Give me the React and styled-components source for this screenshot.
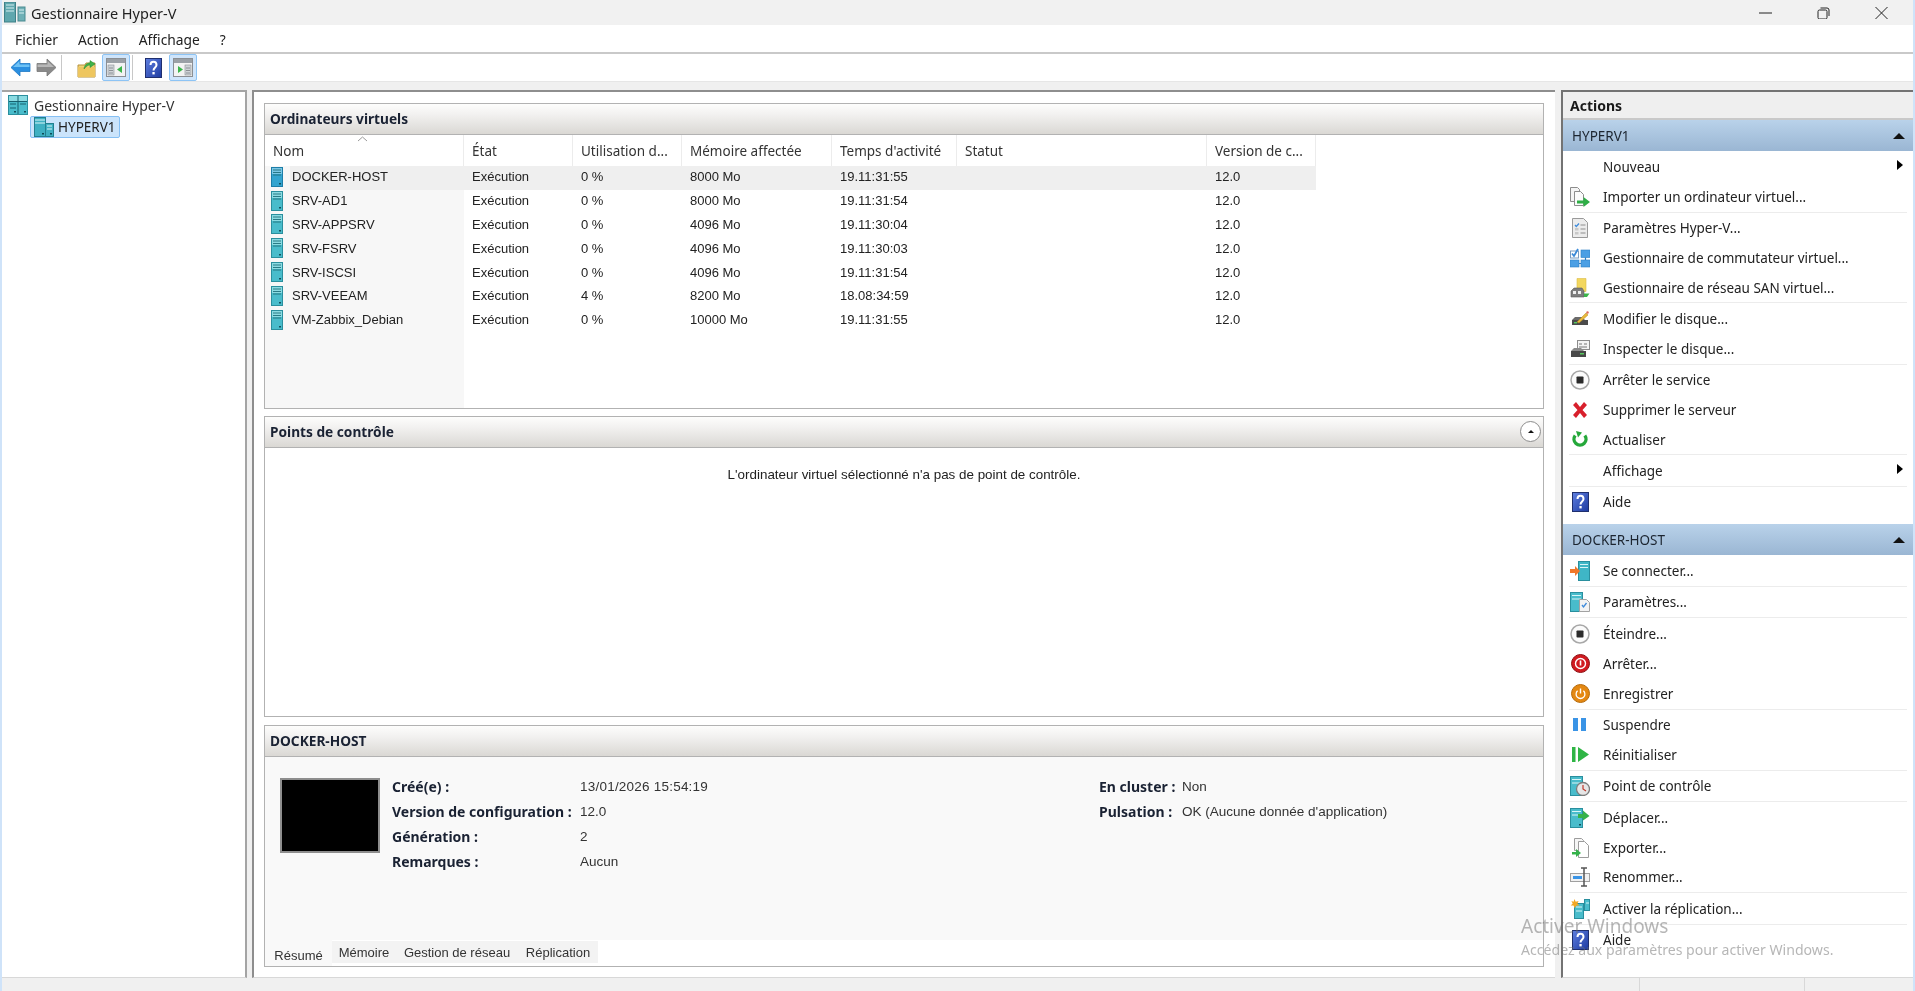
import React from "react";
import styled, { createGlobalStyle } from "styled-components";

const UI = `"Noto Sans", "Open Sans", sans-serif`;
const LIST = `"Liberation Sans", Arial, sans-serif`;

const Global = createGlobalStyle`
  html, body { margin: 0; padding: 0; height: 100%; overflow: hidden; background: #f0f0f0; }
  #root { height: 100%; }
  * { box-sizing: border-box; }
`;

const Window = styled.div`
  position: relative; width: 1915px; height: 991px; display: flex; flex-direction: column;
  background: #f0f0f0; border-left: 2px solid #cfe3f9; border-right: 2px solid #cfe3f9;
  font-family: ${UI}; color: #1c1c1c; overflow: hidden; filter: blur(.3px);
`;
const TitleBar = styled.div`height: 25px; display: flex; align-items: center; background: #f1f1f1; padding-left: 2px;`;
const TitleText = styled.span`font-size: 14.5px; margin-left: 5px; color: #222;`;
const WinControls = styled.div`margin-left: auto; display: flex; align-items: center; margin-right: 25px; gap: 45px;`;
const MenuBar = styled.div`
  height: 29px; display: flex; align-items: center; background: #fff; border-bottom: 2px solid #c9c9c9;
  padding: 2px 0 0 13px; gap: 20px;
`;
const MenuItem = styled.span`font-size: 13.8px; color: #222;`;
const ToolBar = styled.div`height: 28px; display: flex; align-items: center; background: #fff; border-bottom: 1px solid #e6e6e6; padding-left: 6px;`;
const ToolIcon = styled.div`
  width: ${p => p.$w || 28}px; height: 27px; display: flex; align-items: center; justify-content: center;
  margin-right: ${p => p.$mr || 0}px;
  ${p => p.$on && `background: #cfe5fb; border: 1px solid #8dc4f5; border-radius: 2px;`}
`;
const ToolSep = styled.div`width: 1px; height: 25px; background: #c8c8c8; margin: 0 ${p => p.$r || 6}px 0 ${p => p.$l || 2}px;`;
const Main = styled.div`flex: 1; margin-top: 8px; display: flex; min-height: 0;`;
const TreePanel = styled.div`
  width: 245px; background: #fff; border-top: 2px solid #a4a4a4; border-right: 2px solid #a4a4a4; margin-right: 5px;
  padding: 2px 0 0 6px; border-bottom: 1px solid #d8d8d8;
`;
const TreeRoot = styled.div`display: flex; align-items: center; height: 22px; font-size: 14px; gap: 6px; color: #333;`;
const TreeNode = styled.div`
  display: inline-flex; align-items: center; height: 22px; margin-left: 22px; padding: 0 3px; gap: 4px; font-size: 13.5px;
  background: #cbe4fb; border: 1px solid #86c0f4; border-radius: 2px; color: #222;
`;
const Center = styled.div`
  width: 1303px; background: #fff; border-top: 2px solid #8e8e8e; border-left: 2px solid #8e8e8e; margin-right: 6px;
  padding: 11px 11px 11px 10px; display: flex; flex-direction: column; gap: 7px; border-bottom: 1px solid #d8d8d8;
`;
const Pane = styled.section`
  display: flex; flex-direction: column; border: 1.5px solid #b2b2b2; height: ${p => p.$h}px; flex: none;
  background: ${p => p.$bg || "#fff"}; margin-top: ${p => p.$mt || 0}px;
`;
const PaneHead = styled.header`
  height: 31px; flex: none; display: flex; align-items: center; justify-content: space-between; padding: 0 2px 2px 5px;
  background: linear-gradient(#fdfdfc, #f2f1f0 35%, #dad8d4); border-bottom: 1.5px solid #b2b2b2;
  font-size: 13.7px; font-weight: 700; color: #1a2233;
`;
const Collapse = styled.div`
  width: 21px; height: 21px; border-radius: 50%; border: 1px solid #8c8c8c; background: #fff; display: flex; align-items: center; justify-content: center;
`;
const Up = styled.span`width: 0; height: 0; border-left: ${p => p.$s}px solid transparent; border-right: ${p => p.$s}px solid transparent; border-bottom: ${p => p.$s}px solid #111;`;
const Cols = "199px 109px 109px 150px 125px 250px 109px";
const ListHead = styled.div`
  display: grid; grid-template-columns: ${Cols}; width: 1051px; height: 31px; flex: none; position: relative;
`;
const HeadCell = styled.div`
  font-size: 13.5px; color: #333; padding: 7px 0 0 8px; border-right: 1px solid #ececec; white-space: nowrap; overflow: hidden;
`;
const SortMark = styled.svg`position: absolute; left: 92px; top: 1px;`;
const ListBody = styled.div`flex: 1; background: linear-gradient(to right, #f7f7f7 199px, #fff 199px); font-family: ${LIST}; font-size: 13px; color: #222;`;
const Row = styled.div`display: grid; grid-template-columns: ${Cols}; width: 1051px; height: 23.8px; align-items: center;`;
const NameCell = styled.div`display: flex; align-items: center; height: 100%; padding-left: 6px; gap: 7px;`;
const NameText = styled.span`
  flex: 1; align-self: stretch; display: flex; align-items: center; padding: 0 0 2px 2px;
  background: ${p => p.$sel ? "#efefef" : "transparent"};
`;
const Cell = styled.div`padding: 0 0 2px 8px; height: 100%; display: flex; align-items: center; background: ${p => p.$sel ? "#efefef" : "transparent"};`;
const Empty = styled.div`flex: 1; text-align: center; font-size: 13.4px; padding-top: 19px; font-family: ${LIST}; color: #222;`;
const Details = styled.div`flex: 1; display: flex; background: #f9f9f9; padding: 21px 0 0 15px; font-family: ${LIST}; font-size: 13.5px; color: #333;`;
const Thumb = styled.div`width: 100px; height: 75px; background: #000; border: 2px solid #8e8e8e; margin-right: 12px;`;
const Props = styled.div`
  display: grid; grid-template-columns: ${p => p.$cols}; grid-auto-rows: 25px; width: ${p => p.$w}px; align-items: center; height: 100px; margin-top: -4px;
`;
const PropLabel = styled.div`font-family: ${UI}; font-weight: 700; font-size: 14px; color: #1a2233; white-space: nowrap;`;
const PropValue = styled.div`white-space: nowrap; letter-spacing: ${p => p.$spread || 0}px;`;
const Tabs = styled.div`height: 26px; flex: none; display: flex; background: #fff; align-items: flex-start; font-family: ${LIST}; font-size: 13px; color: #333;`;
const Tab = styled.div`
  height: ${p => p.$on ? 26 : 22}px; margin-top: ${p => p.$on ? 0 : 1}px; width: ${p => p.$w}px; display: flex; justify-content: center;
  align-items: ${p => p.$on ? "flex-end" : "center"}; padding-bottom: ${p => p.$on ? 3 : 0}px;
  background: ${p => p.$on ? "#f9f9f9" : "#f3f3f3"};
`;
const ActionsPanel = styled.aside`
  width: 352px; background: #fff; border-top: 2px solid #737373; border-left: 2px solid #737373; border-bottom: 1px solid #d8d8d8;
  display: flex; flex-direction: column;
`;
const ActionsTitle = styled.div`height: 28px; flex: none; background: #efefef; border-bottom: 2px solid #c9c9c9; padding-left: 7px; font-size: 14px; font-weight: 700; color: #1a1a1a; display: flex; align-items: center;`;
const SectionHead = styled.div`
  height: 31px; flex: none; background: linear-gradient(#b9d2ea, #9ab6d3); display: flex; align-items: center; justify-content: space-between;
  padding: 1px 8px 0 9px; font-size: 13.5px; color: #1c2530; margin: ${p => p.$mt || 0}px 0 1px;
`;
const ActionRow = styled.div`height: ${p => p.$h}px; flex: none; display: flex; align-items: center; padding-left: 7px; position: relative;`;
const IconSlot = styled.div`width: 20px; height: 20px; display: flex; align-items: center; justify-content: center; margin-right: 13px;`;
const ActionText = styled.span`font-size: 13.5px; color: #222; white-space: nowrap;`;
const Chevron = styled.span`position: absolute; right: 10px; top: 8px; width: 0; height: 0; border-top: 5.5px solid transparent; border-bottom: 5.5px solid transparent; border-left: 6px solid #000;`;
const ActionSep = styled.div`height: 1.5px; flex: none; margin: 0 6px; border-top: 1px solid #ececec;`;
const StatusBar = styled.div`height: 13px; flex: none; display: grid; grid-template-columns: 1638px 165px 1fr; background: #f0f0f0;`;
const StatusCell = styled.div`border-right: 1px solid #d8d8d8;`;
const Watermark = styled.div`position: absolute; left: 1519px; top: 913px; color: rgba(110,110,110,.5); pointer-events: none;`;
const WmTitle = styled.div`font-size: 19px; line-height: 26px;`;
const WmText = styled.div`font-size: 14.1px; line-height: 20px; margin-top: 1px;`;

const Tower = ({ sel, w = 12, h = 20 }) => (
  <svg width={w} height={h} viewBox="0 0 12 20" style={{ flex: "none", marginTop: -2 }}>
    <rect x=".5" y=".5" width="11" height="19" fill={sel ? "#33a4cf" : "#49bccb"} stroke={sel ? "#1d7ea8" : "#2a8f9e"} />
    <rect x="1" y="1" width="10" height="6" fill={sel ? "#7ac7e6" : "#8adbe2"} />
    <path d="M2 3h8M2 5.5h8M2 8h8" stroke="#1f6f7c" strokeWidth=".9" />
    <rect x="8" y="16" width="2" height="1.5" fill="#134f5c" />
  </svg>
);
const TreeRootIcon = () => (
  <svg width="20" height="20" viewBox="0 0 20 20">
    <rect x=".5" y=".5" width="19" height="19" fill="#49bccb" stroke="#2a8f9e" />
    <rect x="1" y="1" width="18" height="5" fill="#8adbe2" />
    <path d="M1 6.5h18M10 1v18M2 9h6M12 9h6M2 13h6" stroke="#17606e" strokeWidth="1" />
    <rect x="6" y="16" width="2" height="1.5" fill="#134f5c" /><rect x="16" y="16" width="2" height="1.5" fill="#134f5c" />
  </svg>
);
const TreeHostIcon = () => (
  <svg width="20" height="20" viewBox="0 0 20 20">
    <rect x=".5" y=".5" width="11" height="19" fill="#3fb0c2" stroke="#23808f" />
    <rect x="11.5" y="6.5" width="8" height="13" fill="#3fb0c2" stroke="#23808f" />
    <path d="M1 3h10M1 6h10M13 9h5M13 12h5" stroke="#d9f5f7" strokeWidth="1" />
    <rect x="8" y="16" width="2" height="1.5" fill="#0f4a55" /><rect x="16" y="16" width="2" height="1.5" fill="#0f4a55" />
  </svg>
);
const AppIcon = () => (
  <svg width="22" height="22" viewBox="0 0 22 22">
    <rect x=".5" y="0" width="11" height="20" fill="#5fa7ae" stroke="#3f8087" />
    <path d="M2 3h8M2 6h8M2 9h8" stroke="#d6eef0" />
    <rect x="14" y="5" width="7" height="14" fill="#6fb0b6" stroke="#4a8b91" />
    <path d="M15 8h5M15 11h5" stroke="#d6eef0" />
  </svg>
);
const Arrow = ({ flip, top, bottom, edge }) => (
  <svg width="21" height="19" viewBox="0 0 21 19" style={flip ? { transform: "scaleX(-1)" } : undefined}>
    <path d="M1 9.5 L10 1 V5.5 H20 V13.5 H10 V18 Z" fill={bottom} stroke={edge} strokeWidth=".8" />
    <path d="M3 9 L9.5 3 V6.5 H19.5 V9 Z" fill={top} />
  </svg>
);
const FolderUp = () => (
  <svg width="20" height="20" viewBox="0 0 20 20">
    <path d="M1 7h7l1-2h9v14H1z" fill="#f0d378" stroke="#b6923c" />
    <path d="M1 9h17v10H1z" fill="#eec65f" />
    <path d="M7 11c.5-4 3-6 6-6V2.5l5 3.5-5 3.5V7c-2 0-4 1.5-6 4z" fill="#3fb24a" stroke="#1f8a2e" strokeWidth=".5" />
  </svg>
);
const PanelIcon = ({ right }) => (
  <svg width="20" height="19" viewBox="0 0 20 19">
    <rect x=".5" y=".5" width="19" height="18" fill="#f3f3f3" stroke="#8b8f94" />
    <rect x="1" y="1" width="18" height="4" fill="#9aa0a6" />
    {right ? <>
      <path d="M5 8 L10 11.5 L5 15z" fill="#3bb54a" />
      <rect x="12" y="7" width="6" height="10" fill="#cfd3d7" stroke="#8b8f94" strokeWidth=".6" />
      <path d="M13 10h4M13 12.5h4M13 15h4" stroke="#7c8085" strokeWidth=".8" />
    </> : <>
      <rect x="2" y="7" width="6" height="10" fill="#cfd3d7" stroke="#8b8f94" strokeWidth=".6" />
      <path d="M3 10h4M3 12.5h4M3 15h4" stroke="#7c8085" strokeWidth=".8" />
      <path d="M16 8 L11 11.5 L16 15z" fill="#3bb54a" />
    </>}
  </svg>
);
const Help = ({ w = 17, h = 20 }) => (
  <svg width={w} height={h} viewBox="0 0 17 20">
    <defs><linearGradient id="hlp" x1="0" y1="0" x2="1" y2="1"><stop offset="0" stopColor="#5f7fe0" /><stop offset="1" stopColor="#1d3aa0" /></linearGradient></defs>
    <rect x=".5" y=".5" width="16" height="19" fill="url(#hlp)" stroke="#1f2f6e" />
    <path d="M5.5 7c0-4.5 6-4.5 6 0 0 2.5-3 2.5-3 5.5" fill="none" stroke="#fff" strokeWidth="2" />
    <rect x="7.4" y="14" width="2.3" height="2.4" fill="#fff" />
  </svg>
);
const I = {
  none: () => null,
  importVm: () => (
    <svg width="20" height="20" viewBox="0 0 20 20">
      <path d="M.5.5h7l2 2v12H.5z" fill="#f4f4f4" stroke="#8c8c8c" />
      <path d="M4.5 4.5h6l3 3v11h-9z" fill="#fbfbfb" stroke="#8c8c8c" />
      <path d="M7 13.5h6.5V10l6.5 5-6.5 5v-3.5H7z" fill="#2fae46" />
    </svg>
  ),
  settings: () => (
    <svg width="16" height="20" viewBox="0 0 16 20">
      <path d="M.5.5h11l4 4v15H.5z" fill="#ececec" stroke="#9a9a9a" />
      <path d="M3 7l1.3 1.5L7 5.5" fill="none" stroke="#3f8bdb" strokeWidth="1.3" />
      <rect x="3" y="10" width="3.5" height="2.5" fill="#c8c8c8" /><rect x="3" y="14" width="3.5" height="2.5" fill="#c8c8c8" />
      <path d="M8.5 7h5M8.5 11h5M8.5 15h5" stroke="#adadad" strokeWidth="1.4" />
    </svg>
  ),
  switchMgr: () => (
    <svg width="20" height="20" viewBox="0 0 20 20">
      <rect x=".5" y="3" width="8" height="7" fill="#fff" stroke="#7a9cc0" />
      <path d="M2 5.5l2 2.5L8 1" fill="none" stroke="#3b8ad8" strokeWidth="1.8" />
      <rect x="11" y="2" width="9" height="7.5" fill="#4b9fe4" stroke="#2c7fc4" strokeWidth=".6" />
      <path d="M15.5 9.5v3M9 15.5h3" stroke="#2c7fc4" strokeWidth="1.2" />
      <rect x="0" y="12" width="9" height="7" fill="#4b9fe4" stroke="#2c7fc4" strokeWidth=".6" />
      <rect x="11" y="12" width="9" height="7" fill="#4b9fe4" stroke="#2c7fc4" strokeWidth=".6" />
    </svg>
  ),
  san: () => (
    <svg width="20" height="20" viewBox="0 0 20 20">
      <path d="M7 .5h9v13H7z" fill="#f3d75f" stroke="#dcbc45" strokeWidth=".6" />
      <path d="M1 13l3-3h8l2 3v6H1z" fill="#7d7d7d" stroke="#5a5a5a" strokeWidth=".6" />
      <rect x="3" y="13" width="3" height="3" fill="#eee" /><rect x="8" y="13" width="3" height="3" fill="#eee" />
      <path d="M14 15.5h5.5L17 19h-3z" fill="#3bb54a" />
    </svg>
  ),
  editDisk: () => (
    <svg width="18" height="15" viewBox="0 0 18 15">
      <path d="M1 9l3-3h7l3 3v5H1z" fill="#6b6b6b" />
      <rect x="1" y="9" width="16" height="5" fill="#4b4b4b" />
      <path d="M6 11l9-9 2 2-9 8z" fill="#e9b93c" stroke="#b78a1e" strokeWidth=".5" />
      <rect x="3" y="11" width="3" height="1.4" fill="#57c85f" />
      <circle cx="16.5" cy="1.5" r="1.2" fill="#e06a5a" />
    </svg>
  ),
  inspectDisk: () => (
    <svg width="20" height="18" viewBox="0 0 20 18">
      <rect x="7.5" y=".5" width="12" height="9" fill="#f4f4f4" stroke="#8c8c8c" />
      <path d="M9 4h3M14 4h3M9 7h8" stroke="#777" />
      <path d="M1 11l3-3h7l3 3z" fill="#8a8a8a" />
      <rect x="1" y="11" width="15" height="6" fill="#484848" />
      <rect x="10" y="13" width="4" height="1.5" fill="#57c85f" />
    </svg>
  ),
  stop: () => (
    <svg width="20" height="20" viewBox="0 0 20 20">
      <circle cx="10" cy="10" r="9" fill="#fbfbfb" stroke="#a8a8a8" strokeWidth="1.5" />
      <rect x="6.5" y="6.5" width="7" height="7" rx=".8" fill="#2a2a2a" />
    </svg>
  ),
  del: () => (
    <svg width="18" height="18" viewBox="0 0 18 18"><path d="M2 4l3-3 4 5 4-5 3 3-4.5 5 4.500 5-3 3-4-5-4 5-3-3 4.5-5z" fill="#d8202c" /></svg>
  ),
  refresh: () => (
    <svg width="16" height="17" viewBox="0 0 16 17">
      <path d="M3.2 4.5 A6 6 0 1 0 12.8 4.5" fill="none" stroke="#25a83a" strokeWidth="3.4" />
      <path d="M4 0 L10 1.5 L6 6.5z" fill="#25a83a" />
    </svg>
  ),
  connect: () => (
    <svg width="20" height="20" viewBox="0 0 20 20">
      <rect x="8.5" y=".5" width="11" height="19" fill="#3fb6c6" stroke="#2a8f9e" />
      <path d="M10 3.5h8M10 6.5h8" stroke="#d9f5f7" />
      <path d="M0 8h5V5l5 5-5 5v-3H0z" fill="#f0782a" />
    </svg>
  ),
  vmSettings: () => (
    <svg width="20" height="20" viewBox="0 0 20 20">
      <rect x=".5" y=".5" width="12" height="19" fill="#49bccb" stroke="#2a8f9e" />
      <path d="M2 3.5h9M2 7h9" stroke="#d9f5f7" />
      <path d="M9.5 7.5h7l3 3v9h-10z" fill="#f3f3f3" stroke="#a2a2a2" />
      <path d="M12 13l1.5 2 3-4" fill="none" stroke="#3f8bdb" strokeWidth="1.3" />
    </svg>
  ),
  off: () => (
    <svg width="19" height="19" viewBox="0 0 19 19">
      <circle cx="9.5" cy="9.5" r="9" fill="#d11a20" stroke="#8f1014" />
      <circle cx="9.5" cy="9.5" r="5" fill="none" stroke="#fff" strokeWidth="1.4" />
      <rect x="8.7" y="6.5" width="1.6" height="5" fill="#fff" />
    </svg>
  ),
  save: () => (
    <svg width="19" height="19" viewBox="0 0 19 19">
      <circle cx="9.5" cy="9.5" r="9" fill="#e48812" stroke="#b66a0a" />
      <path d="M6.6 6.8a4.4 4.4 0 1 0 5.8 0" fill="none" stroke="#fff" strokeWidth="1.3" />
      <rect x="8.8" y="4.5" width="1.4" height="5" fill="#fff" />
    </svg>
  ),
  pause: () => (
    <svg width="14" height="14" viewBox="0 0 14 14"><rect x="0" y="0" width="5" height="13" fill="#3a94e6" /><rect x="8" y="0" width="5" height="13" fill="#3a94e6" /></svg>
  ),
  reset: () => (
    <svg width="17" height="15" viewBox="0 0 17 15"><rect x="0" y="0" width="3.5" height="15" fill="#2fb545" /><path d="M6 0l11 7.5L6 15z" fill="#2fb545" /></svg>
  ),
  checkpoint: () => (
    <svg width="20" height="20" viewBox="0 0 20 20">
      <rect x=".5" y=".5" width="12" height="19" fill="#49bccb" stroke="#2a8f9e" />
      <path d="M2 3.5h9M2 7h9" stroke="#d9f5f7" />
      <circle cx="13" cy="13" r="6.5" fill="#e6e6e6" stroke="#7c7c7c" strokeWidth="1.3" />
      <path d="M13 9v4l3 2" stroke="#c0392b" fill="none" strokeWidth="1.2" />
    </svg>
  ),
  move: () => (
    <svg width="20" height="20" viewBox="0 0 20 20">
      <rect x=".5" y=".5" width="12" height="19" fill="#49bccb" stroke="#2a8f9e" />
      <path d="M2 3.5h9M2 7h9" stroke="#d9f5f7" />
      <rect x="9" y="16" width="2" height="1.5" fill="#134f5c" />
      <path d="M8 6h5V2.5L19.5 8 13 12.5V10H8z" fill="#35b24a" />
    </svg>
  ),
  exportVm: () => (
    <svg width="17" height="20" viewBox="0 0 17 20">
      <path d="M2.5.5h7l2 2v10h-9z" fill="#f6f6f6" stroke="#9c9c9c" />
      <path d="M6.5 3.5h6l4 4v12h-10z" fill="#fff" stroke="#9c9c9c" />
      <path d="M0 14h4v-3l5 4-5 4v-2.5H0z" fill="#35b24a" />
    </svg>
  ),
  rename: () => (
    <svg width="20" height="20" viewBox="0 0 20 20">
      <rect x=".5" y="6.5" width="19" height="8" fill="#f1f1f1" stroke="#a0a0a0" />
      <rect x="3" y="9" width="9" height="3" fill="#3a94e6" />
      <path d="M11 1h6M11 19h6M14 1v18" stroke="#555" strokeWidth="1.5" />
    </svg>
  ),
  replicate: () => (
    <svg width="20" height="20" viewBox="0 0 20 20">
      <rect x="4.5" y="4.5" width="9" height="15" fill="#49bccb" stroke="#2a8f9e" />
      <rect x="14.5" y=".5" width="5" height="11" fill="#49bccb" stroke="#2a8f9e" />
      <path d="M6 8h6M6 12h6M16 4h3" stroke="#d9f5f7" />
      <path d="M4.5 0l1.2 2.8L8.6 2 7.4 4.6l2 2-2.900-.2L4.5 9 3.6 6.400.7 6.600l2-2L1.4 2l2.200.8z" fill="#f2a825" />
    </svg>
  ),
  help: () => <Help />,
};

const hostActions = [
  { label: "Nouveau", icon: "none", more: true },
  { label: "Importer un ordinateur virtuel...", icon: "importVm", sep: true },
  { label: "Paramètres Hyper-V...", icon: "settings" },
  { label: "Gestionnaire de commutateur virtuel...", icon: "switchMgr" },
  { label: "Gestionnaire de réseau SAN virtuel...", icon: "san", sep: true },
  { label: "Modifier le disque...", icon: "editDisk" },
  { label: "Inspecter le disque...", icon: "inspectDisk", sep: true },
  { label: "Arrêter le service", icon: "stop" },
  { label: "Supprimer le serveur", icon: "del" },
  { label: "Actualiser", icon: "refresh", sep: true },
  { label: "Affichage", icon: "none", more: true, sep: true },
  { label: "Aide", icon: "help" },
];
const vmActions = [
  { label: "Se connecter...", icon: "connect", sep: true },
  { label: "Paramètres...", icon: "vmSettings", sep: true },
  { label: "Éteindre...", icon: "stop" },
  { label: "Arrêter...", icon: "off" },
  { label: "Enregistrer", icon: "save", sep: true },
  { label: "Suspendre", icon: "pause" },
  { label: "Réinitialiser", icon: "reset", sep: true },
  { label: "Point de contrôle", icon: "checkpoint", sep: true },
  { label: "Déplacer...", icon: "move" },
  { label: "Exporter...", icon: "exportVm" },
  { label: "Renommer...", icon: "rename", sep: true },
  { label: "Activer la réplication...", icon: "replicate", sep: true },
  { label: "Aide", icon: "help" },
];
const vms = [
  ["DOCKER-HOST", "0 %", "8000 Mo", "19.11:31:55"],
  ["SRV-AD1", "0 %", "8000 Mo", "19.11:31:54"],
  ["SRV-APPSRV", "0 %", "4096 Mo", "19.11:30:04"],
  ["SRV-FSRV", "0 %", "4096 Mo", "19.11:30:03"],
  ["SRV-ISCSI", "0 %", "4096 Mo", "19.11:31:54"],
  ["SRV-VEEAM", "4 %", "8200 Mo", "18.08:34:59"],
  ["VM-Zabbix_Debian", "0 %", "10000 Mo", "19.11:31:55"],
];
const heads = ["Nom", "État", "Utilisation d...", "Mémoire affectée", "Temps d'activité", "Statut", "Version de c..."];

const ActionList = ({ items, rowH }) => items.map(a => {
  const Ico = I[a.icon];
  return (
    <React.Fragment key={a.label + a.icon}>
      <ActionRow $h={rowH}>
        <IconSlot><Ico /></IconSlot>
        <ActionText>{a.label}</ActionText>
        {a.more && <Chevron />}
      </ActionRow>
      {a.sep && <ActionSep />}
    </React.Fragment>
  );
});

export default function App() {
  return (
    <Window>
      <Global />
      <TitleBar>
        <AppIcon />
        <TitleText>Gestionnaire Hyper-V</TitleText>
        <WinControls>
          <svg width="13" height="12" viewBox="0 0 13 12"><path d="M0 6h13" stroke="#222" strokeWidth="1" /></svg>
          <svg width="13" height="12" viewBox="0 0 13 12"><rect x="1" y="3" width="9" height="9" rx="1.5" fill="none" stroke="#222" /><path d="M3.5 1h6.5a2 2 0 0 1 2 2v6" fill="none" stroke="#222" /></svg>
          <svg width="13" height="12" viewBox="0 0 13 12"><path d="M.5 0l12 12M12.5 0l-12 12" stroke="#222" /></svg>
        </WinControls>
      </TitleBar>
      <MenuBar>
        <MenuItem>Fichier</MenuItem>
        <MenuItem>Action</MenuItem>
        <MenuItem>Affichage</MenuItem>
        <MenuItem>?</MenuItem>
      </MenuBar>
      <ToolBar>
        <ToolIcon $w={24}><Arrow top="#6ec2f5" bottom="#2b8fe0" edge="#1f78c4" /></ToolIcon>
        <ToolIcon $w={28}><Arrow flip top="#b8b8b8" bottom="#8a8a8a" edge="#777" /></ToolIcon>
        <ToolSep $l={1} $r={13} />
        <ToolIcon $w={24} $mr={3}><FolderUp /></ToolIcon>
        <ToolIcon $on><PanelIcon /></ToolIcon>
        <ToolSep $l={2} $r={7} />
        <ToolIcon $w={26} $mr={3}><Help /></ToolIcon>
        <ToolIcon $on><PanelIcon right /></ToolIcon>
      </ToolBar>
      <Main>
        <TreePanel>
          <TreeRoot><TreeRootIcon />Gestionnaire Hyper-V</TreeRoot>
          <TreeNode><TreeHostIcon />HYPERV1</TreeNode>
        </TreePanel>
        <Center>
          <Pane $h={306}>
            <PaneHead>Ordinateurs virtuels</PaneHead>
            <ListHead>
              {heads.map(h => <HeadCell key={h}>{h}</HeadCell>)}
              <SortMark width="11" height="6" viewBox="0 0 11 6"><path d="M1 5l4.5-4 4.5 4" fill="none" stroke="#9a9a9a" /></SortMark>
            </ListHead>
            <ListBody>
              {vms.map((v, i) => {
                const sel = i === 0;
                return (
                  <Row key={v[0]}>
                    <NameCell><Tower sel={sel} /><NameText $sel={sel}>{v[0]}</NameText></NameCell>
                    <Cell $sel={sel}>Exécution</Cell>
                    <Cell $sel={sel}>{v[1]}</Cell>
                    <Cell $sel={sel}>{v[2]}</Cell>
                    <Cell $sel={sel}>{v[3]}</Cell>
                    <Cell $sel={sel} />
                    <Cell $sel={sel}>12.0</Cell>
                  </Row>
                );
              })}
            </ListBody>
          </Pane>
          <Pane $h={301}>
            <PaneHead>Points de contrôle<Collapse><Up $s={3.5} /></Collapse></PaneHead>
            <Empty>L'ordinateur virtuel sélectionné n'a pas de point de contrôle.</Empty>
          </Pane>
          <Pane $h={242} $mt={1} $bg="#f9f9f9">
            <PaneHead>DOCKER-HOST</PaneHead>
            <Details>
              <Thumb />
              <Props $cols="188px 1fr" $w={707}>
                <PropLabel>Créé(e) :</PropLabel><PropValue $spread={0.22}>13/01/2026 15:54:19</PropValue>
                <PropLabel>Version de configuration :</PropLabel><PropValue>12.0</PropValue>
                <PropLabel>Génération :</PropLabel><PropValue>2</PropValue>
                <PropLabel>Remarques :</PropLabel><PropValue>Aucun</PropValue>
              </Props>
              <Props $cols="83px 1fr" $w={320}>
                <PropLabel>En cluster :</PropLabel><PropValue>Non</PropValue>
                <PropLabel>Pulsation :</PropLabel><PropValue>OK (Aucune donnée d'application)</PropValue>
              </Props>
            </Details>
            <Tabs>
              <Tab $on $w={67}>Résumé</Tab>
              <Tab $w={64}>Mémoire</Tab>
              <Tab $w={122}>Gestion de réseau</Tab>
              <Tab $w={80}>Réplication</Tab>
            </Tabs>
          </Pane>
        </Center>
        <ActionsPanel>
          <ActionsTitle>Actions</ActionsTitle>
          <SectionHead>HYPERV1<Up $s={6} /></SectionHead>
          <ActionList items={hostActions} rowH={29.8} />
          <SectionHead $mt={7}>DOCKER-HOST<Up $s={6} /></SectionHead>
          <ActionList items={vmActions} rowH={29.9} />
        </ActionsPanel>
      </Main>
      <StatusBar><StatusCell /><StatusCell /><div /></StatusBar>
      <Watermark>
        <WmTitle>Activer Windows</WmTitle>
        <WmText>Accédez aux paramètres pour activer Windows.</WmText>
      </Watermark>
    </Window>
  );
}
